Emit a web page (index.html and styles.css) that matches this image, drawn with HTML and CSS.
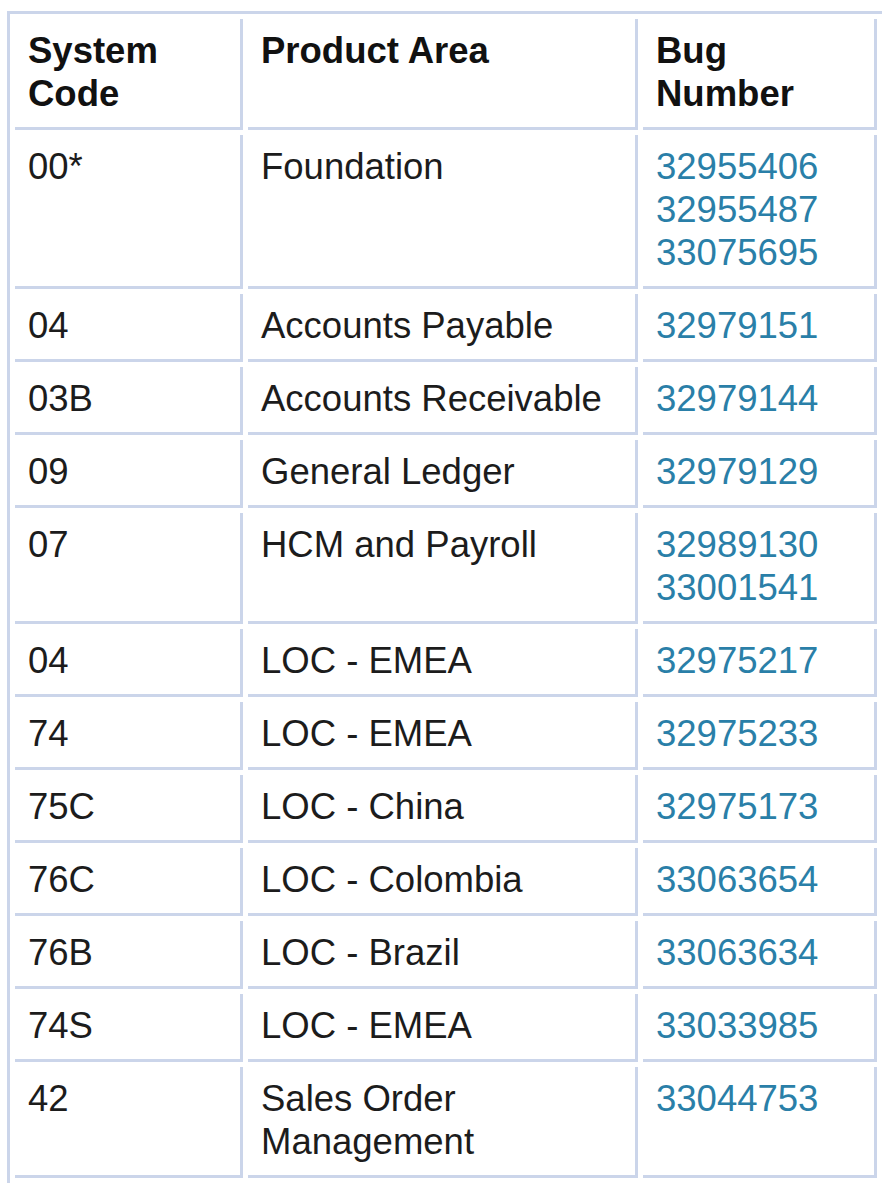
FILE: index.html
```html
<!DOCTYPE html>
<html>
<head>
<meta charset="utf-8">
<link rel="stylesheet" href="styles.css">
</head>
<body>
<table class="bugs">
  <thead>
    <tr>
      <th class="c1">System<br>Code</th>
      <th class="c2">Product Area</th>
      <th class="c3">Bug<br>Number</th>
    </tr>
  </thead>
  <tbody>
    <tr><td>00*</td><td>Foundation</td><td><a>32955406</a><br><a>32955487</a><br><a>33075695</a></td></tr>
    <tr><td>04</td><td>Accounts Payable</td><td><a>32979151</a></td></tr>
    <tr><td>03B</td><td>Accounts Receivable</td><td><a>32979144</a></td></tr>
    <tr><td>09</td><td>General Ledger</td><td><a>32979129</a></td></tr>
    <tr><td>07</td><td>HCM and Payroll</td><td><a>32989130</a><br><a>33001541</a></td></tr>
    <tr><td>04</td><td>LOC - EMEA</td><td><a>32975217</a></td></tr>
    <tr><td>74</td><td>LOC - EMEA</td><td><a>32975233</a></td></tr>
    <tr><td>75C</td><td>LOC - China</td><td><a>32975173</a></td></tr>
    <tr><td>76C</td><td>LOC - Colombia</td><td><a>33063654</a></td></tr>
    <tr><td>76B</td><td>LOC - Brazil</td><td><a>33063634</a></td></tr>
    <tr><td>74S</td><td>LOC - EMEA</td><td><a>33033985</a></td></tr>
    <tr><td>42</td><td>Sales Order Management</td><td><a>33044753</a></td></tr>
  </tbody>
</table>
</body>
</html>
```
FILE: styles.css
```css
html, body {
  margin: 0;
  padding: 0;
  background: #ffffff;
}
body {
  padding: 11px 0 0 7px;
}
.bugs {
  border-collapse: separate;
  border-spacing: 5px;
  border-top: 3px solid #cbd5ea;
  border-left: 3px solid #cbd5ea;
  font-family: "Liberation Sans", Arial, sans-serif;
  font-size: 36.5px;
  line-height: 43px;
  color: #1c1c1c;
}
.bugs th,
.bugs td {
  box-sizing: border-box;
  text-align: left;
  vertical-align: top;
  padding: 10px 8px 12px 13px;
  border-right: 3px solid #cbd5ea;
  border-bottom: 3px solid #cbd5ea;
}
.bugs th {
  font-weight: bold;
  color: #111;
}
.bugs .c1 { width: 228px; }
.bugs .c2 { width: 390px; }
.bugs .c3 { width: 234px; }
.bugs a {
  color: #2a7fa8;
  text-decoration: none;
}
```
